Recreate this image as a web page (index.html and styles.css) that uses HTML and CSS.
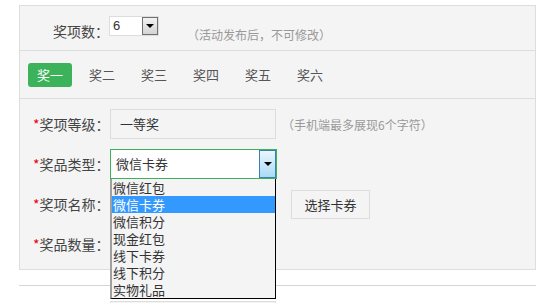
FILE: index.html
```html
<!DOCTYPE html>
<html lang="zh-CN">
<head>
    <meta charset="UTF-8">
    <meta name="viewport" content="width=device-width, initial-scale=1.0">
    <title>奖项设置</title>
    <link rel="stylesheet" href="styles.css">
</head>
<body>
    <div class="panel">
        <!-- 奖项数 -->
        <div class="count-row">
            <span class="count-label">奖项数：</span>
            <div class="mini-select">
                <span class="mini-value">6</span>
                <span class="mini-arrow"></span>
            </div>
            <span class="count-hint">（活动发布后，不可修改）</span>
        </div>

        <!-- 奖项切换 -->
        <div class="tabs">
            <span class="tab active">奖一</span>
            <span class="tab">奖二</span>
            <span class="tab">奖三</span>
            <span class="tab">奖四</span>
            <span class="tab">奖五</span>
            <span class="tab">奖六</span>
        </div>

        <!-- 奖项表单 -->
        <div class="form">
            <div class="form-row">
                <label class="form-label"><i>*</i>奖项等级：</label>
                <div class="text-input readonly">一等奖</div>
                <span class="form-hint">（手机端最多展现6个字符）</span>
            </div>
            <div class="form-row">
                <label class="form-label"><i>*</i>奖品类型：</label>
                <div class="select open">
                    <span class="select-value">微信卡券</span>
                    <span class="select-arrow"></span>
                    <ul class="select-list">
                        <li>微信红包</li>
                        <li class="selected">微信卡券</li>
                        <li>微信积分</li>
                        <li>现金红包</li>
                        <li>线下卡券</li>
                        <li>线下积分</li>
                        <li>实物礼品</li>
                    </ul>
                </div>
            </div>
            <div class="form-row">
                <label class="form-label"><i>*</i>奖项名称：</label>
                <div class="text-input"></div>
                <button class="btn">选择卡券</button>
            </div>
            <div class="form-row">
                <label class="form-label"><i>*</i>奖品数量：</label>
                <div class="text-input"></div>
            </div>
        </div>
    </div>

    <div class="next">
        <div class="text-input"></div>
    </div>
</body>
</html>
```

FILE: styles.css
```css
body {
    margin: 0;
    background-color: #fff;
    font-family: "Microsoft YaHei", "Noto Sans CJK SC", sans-serif;
    color: #444;
}
.panel {
    position: relative;
    margin: 5px 0 0 19px;
    width: 515px;
    border: 1px solid #ddd;
    background-color: #f4f4f4;
}
.count-row {
    display: flex;
    align-items: flex-start;
    height: 44px;
    padding-left: 33px;
    border-bottom: 1px solid #ddd;
}
.count-label {
    margin-top: 15px;
    font-size: 14px;
    line-height: 20px;
}
.mini-select {
    position: relative;
    margin-top: 10px;
    width: 48px;
    height: 18px;
    border: 1px solid #ddd;
    background-color: #fff;
    box-sizing: content-box;
}
.mini-value {
    display: block;
    padding-left: 3px;
    font-family: "Liberation Sans", Arial, sans-serif;
    font-size: 13px;
    line-height: 17px;
    color: #333;
}
.mini-arrow {
    position: absolute;
    right: 0;
    top: 0;
    width: 14px;
    height: 16px;
    border: 1px solid #707070;
    background: linear-gradient(#f2f2f2, #d4d4d4);
}
.mini-arrow::after,
.select-arrow::after {
    content: "";
    position: absolute;
    left: 50%;
    top: 50%;
    margin: -2px 0 0 -4px;
    border-left: 4px solid transparent;
    border-right: 4px solid transparent;
    border-top: 4px solid #000;
}
.count-hint {
    margin: 21px 0 0 28px;
    font-size: 12px;
    line-height: 16px;
    color: #999;
}
.tabs {
    display: flex;
    gap: 8px;
    height: 48px;
    padding: 12px 0 0 8px;
    box-sizing: border-box;
    border-bottom: 1px solid #ddd;
}
.tab {
    width: 44px;
    height: 24px;
    font-size: 13px;
    line-height: 24px;
    text-align: center;
    color: #555;
    border-radius: 3px;
}
.tab.active {
    background-color: #3cb35b;
    color: #fff;
}
.form {
    padding: 10px 0 0 13px;
}
.form-row {
    display: flex;
    align-items: center;
    height: 30px;
    margin-bottom: 10px;
}
.form-label {
    width: 77px;
    font-size: 14px;
    line-height: 20px;
    white-space: nowrap;
}
.form-label i {
    font-style: normal;
    color: #e60012;
}
.text-input {
    width: 164px;
    height: 28px;
    border: 1px solid #ddd;
    background-color: #f4f4f4;
    font-size: 13px;
    line-height: 28px;
    color: #333;
}
.text-input.readonly {
    padding-left: 9px;
    width: 155px;
}
.form-hint {
    margin-left: 6px;
    font-size: 12px;
    color: #999;
}
.select {
    position: relative;
    width: 165px;
    height: 28px;
    border: 1px solid #3cb35b;
    background-color: #fff;
}
.select-value {
    display: block;
    padding-left: 5px;
    font-size: 13px;
    line-height: 28px;
    color: #333;
}
.select-arrow {
    position: absolute;
    right: 0;
    top: 0;
    width: 15px;
    height: 26px;
    border: 1px solid #3c7fb1;
    background: linear-gradient(#eaf6fd, #a9dbf6);
}
.select-list {
    position: absolute;
    left: -1px;
    top: 29px;
    z-index: 2;
    width: 163px;
    margin: 0;
    padding: 0;
    list-style: none;
    border-left: 2px solid #a0a0a0;
    border-right: 1px solid #000;
    border-bottom: 1px solid #000;
    background-color: #f4f4f4;
}
.select-list li {
    height: 17px;
    padding-left: 1px;
    font-size: 13px;
    line-height: 17px;
    color: #333;
    overflow: hidden;
}
.select-list li.selected {
    background-color: #3399ff;
    color: #fff;
}
.btn {
    margin-left: 15px;
    width: 79px;
    height: 29px;
    border: 1px solid #ddd;
    background-color: #f4f4f4;
    font-family: inherit;
    font-size: 13px;
    color: #333;
    padding: 0;
}
.next {
    margin: 15px 0 0 19px;
    width: 517px;
    height: 18px;
    overflow: hidden;
    border-top: 1px solid #d5d5d5;
    padding: 15px 0 0 91px;
    box-sizing: border-box;
}
```
